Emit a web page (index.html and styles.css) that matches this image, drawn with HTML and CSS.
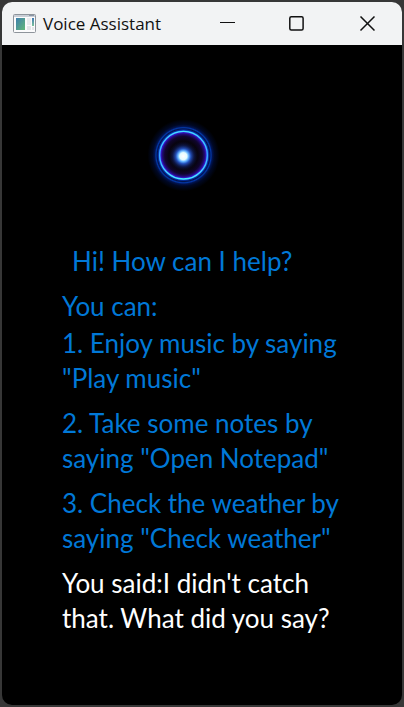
FILE: index.html
```
<!DOCTYPE html>
<html lang="en">
<head>
<meta charset="utf-8">
<title>Voice Assistant</title>
<link rel="stylesheet" href="styles.css">
</head>
<body>
<div class="window">
  <header class="titlebar">
    <svg class="app-icon" width="24" height="20" viewBox="0 0 24 20" aria-hidden="true">
      <defs>
        <linearGradient id="pane" x1="0" y1="0" x2="1" y2="1">
          <stop offset="0" stop-color="#3f7fae"/>
          <stop offset="1" stop-color="#63b878"/>
        </linearGradient>
        <linearGradient id="strip" x1="0" y1="0" x2="0" y2="1">
          <stop offset="0" stop-color="#3f78b4"/>
          <stop offset="1" stop-color="#7cc49a"/>
        </linearGradient>
      </defs>
      <rect x="0.5" y="0.5" width="22" height="18" rx="1" fill="#fbfbfc" stroke="#8e949b"/>
      <path d="M1 2h21" stroke="#c9ced6" stroke-width="2"/>
      <path d="M16 1.5h5" stroke="#8b96a6"/>
      <rect x="3" y="4" width="9" height="12" fill="url(#pane)"/>
      <rect x="14" y="4" width="4" height="7" fill="#e9ebee"/>
      <rect x="14" y="12" width="4" height="4" fill="#e3e5e8"/>
      <rect x="19" y="4" width="2" height="8" fill="url(#strip)"/>
      <rect x="19" y="13" width="2" height="3" fill="#e3e5e8"/>
    </svg>
    <h1 class="title">Voice Assistant</h1>
    <div class="controls">
      <button class="control" type="button" aria-label="Minimize">
        <svg width="16" height="16" viewBox="0 0 16 16"><path d="M1 6.5h15"/></svg>
      </button>
      <button class="control" type="button" aria-label="Maximize">
        <svg class="bold" width="16" height="16" viewBox="0 0 16 16"><rect x="0.8" y="0.8" width="13.3" height="13.3" rx="1.5"/></svg>
      </button>
      <button class="control" type="button" aria-label="Close">
        <svg class="bold" width="16" height="16" viewBox="0 0 16 16"><path d="M1.5 0.5l14 14M15.5 0.5l-14 14"/></svg>
      </button>
    </div>
  </header>
  <main class="assistant">
    <svg class="orb" width="80" height="80" viewBox="0 0 80 80" role="img" aria-label="Listening">
      <defs>
        <radialGradient id="halo" gradientUnits="userSpaceOnUse" cx="39.5" cy="40.2" r="36">
          <stop offset="0" stop-color="#0a0a1c"/>
          <stop offset="0.4" stop-color="#08040f"/>
          <stop offset="0.52" stop-color="#10052e"/>
          <stop offset="0.59" stop-color="#220a78"/>
          <stop offset="0.635" stop-color="#3a18d8"/>
          <stop offset="0.67" stop-color="#1a60f4"/>
          <stop offset="0.7" stop-color="#0430a0"/>
          <stop offset="0.73" stop-color="#01124c"/>
          <stop offset="0.765" stop-color="#0338a8"/>
          <stop offset="0.8" stop-color="#011350"/>
          <stop offset="0.86" stop-color="#000824"/>
          <stop offset="1" stop-color="#000000"/>
        </radialGradient>
        <radialGradient id="core" gradientUnits="userSpaceOnUse" cx="39.3" cy="41.2" r="15">
          <stop offset="0" stop-color="#ffffff"/>
          <stop offset="0.24" stop-color="#e2fdff"/>
          <stop offset="0.36" stop-color="#65b4ff"/>
          <stop offset="0.5" stop-color="#2450bb"/>
          <stop offset="0.72" stop-color="#101d58" stop-opacity="0.7"/>
          <stop offset="1" stop-color="#090820" stop-opacity="0"/>
        </radialGradient>
        <linearGradient id="rim" x1="0" y1="0" x2="0" y2="1">
          <stop offset="0" stop-color="#42e4ff"/>
          <stop offset="0.5" stop-color="#3ab0ff"/>
          <stop offset="1" stop-color="#4aecff"/>
        </linearGradient>
      </defs>
      <circle cx="39.5" cy="40.2" r="36" fill="url(#halo)"/>
      <circle cx="39.5" cy="40.2" r="23.8" fill="none" stroke="url(#rim)" stroke-width="1.3"/>
      <circle cx="39.3" cy="41.2" r="15" fill="url(#core)"/>
    </svg>
    <p class="greeting">Hi! How can I help?</p>
    <section class="messages">
      <p class="intro">You can:</p>
      <p>1. Enjoy music by saying "Play music"</p>
      <p>2. Take some notes by saying "Open Notepad"</p>
      <p>3. Check the weather by saying "Check weather"</p>
      <p class="reply">You said:I didn't catch that. What did you say?</p>
    </section>
  </main>
</div>
</body>
</html>
```
FILE: styles.css
```
* {
  box-sizing: border-box;
}

body {
  margin: 0;
  padding: 2px;
  min-height: 100vh;
  display: flex;
  background: #373737;
}

.window {
  flex: 1;
  display: flex;
  flex-direction: column;
  border-radius: 10px;
  overflow: hidden;
  background: #000;
}

.titlebar {
  display: flex;
  align-items: center;
  height: 43px;
  padding-left: 11px;
  background: #f2f3f4;
}

.app-icon {
  flex: none;
  margin-right: 6px;
}

.title {
  flex: 1;
  margin: 0;
  font: 400 17px/24px "Open Sans", "Noto Sans", sans-serif;
  color: #111;
  white-space: nowrap;
}

.controls {
  display: flex;
  align-self: stretch;
}

.control {
  display: flex;
  align-items: center;
  justify-content: center;
  width: 70px;
  padding: 0;
  border: 0;
  background: none;
}

.control svg {
  fill: none;
  stroke: #111;
  stroke-width: 1;
}

.control .bold {
  stroke-width: 1.5;
}

.assistant {
  display: flex;
  flex-direction: column;
  padding: 70px 60px 0;
  font: 26px/35px Lato, "Open Sans", sans-serif;
  color: #0078d7;
}

.assistant p {
  margin: 0;
}

.orb {
  align-self: center;
  margin-right: 36px;
}

.assistant .greeting {
  padding: 49px 0 10px 10px;
}

.messages {
  display: flex;
  flex-direction: column;
  gap: 10px;
}

.messages .intro {
  margin-bottom: -8px;
}

.reply {
  color: #fff;
}
```
